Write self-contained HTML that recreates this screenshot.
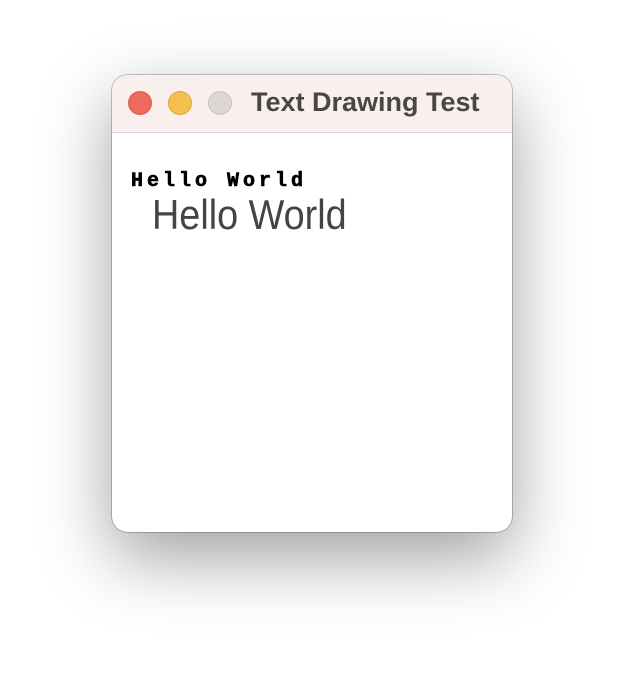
<!DOCTYPE html>
<html><head><style>
html,body{margin:0;padding:0;background:#fff;width:624px;height:680px;overflow:hidden}
.win{position:absolute;left:112px;top:75px;width:400px;height:457px;border-radius:16px;background:#fff;
box-shadow:0 0 0 1px rgba(0,0,0,0.22),0 25px 70px rgba(0,0,0,0.38);overflow:hidden}
.tb{position:absolute;left:0;top:0;width:400px;height:57px;background:#f9f0ed;border-bottom:1px solid #ddd6d3}
.dot{position:absolute;top:16px;width:24px;height:24px;border-radius:50%;box-sizing:border-box}
.t{position:absolute;left:139px;top:12px;font:bold 27px "Liberation Sans",sans-serif;color:#4b4646;white-space:nowrap;transform:scaleX(1.0);transform-origin:left top}
.a{position:absolute;left:19px;top:95px;font:bold 20px "Liberation Mono",monospace;letter-spacing:4px;color:#000;white-space:nowrap;-webkit-text-stroke:0.6px #000}
.b{position:absolute;left:40px;top:116px;font:42px "Liberation Sans",sans-serif;color:#444;white-space:nowrap;transform:scaleX(0.9);transform-origin:left top}
</style></head><body>
<div class="win">
<div class="tb">
<div class="dot" style="left:16px;background:#ee6a5f;border:1px solid #d95a4f"></div>
<div class="dot" style="left:56px;background:#f6c04e;border:1px solid #dea73a"></div>
<div class="dot" style="left:96px;background:#ddd7d4;border:1px solid #c9c2bf"></div>
<div class="t">Text Drawing Test</div>
</div>
<div class="a">Hello World</div>
<div class="b">Hello World</div>
</div>
</body></html>
